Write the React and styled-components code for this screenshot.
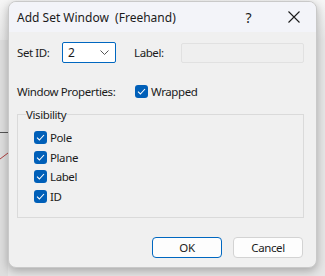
import React from "react";
import styled, { createGlobalStyle } from "styled-components";

const GlobalStyle = createGlobalStyle`
  html, body {
    margin: 0;
    padding: 0;
    background: #e9e9e9;
    font-family: "Noto Sans", "Open Sans", sans-serif;
    font-size: 11.5px;
    letter-spacing: -0.4px;
    color: #1b1b1b;
  }
`;

const Stage = styled.div`
  position: relative;
  width: 325px;
  height: 276px;
  overflow: hidden;
  background: linear-gradient(to bottom, #f6f6f6 0px, #e6e6e6 40px);
`;

const Backdrop = styled.svg`
  position: absolute;
  left: 0;
  top: 0;
`;

const Window = styled.div`
  position: relative;
  margin: 1px 0 0 8px;
  width: 309px;
  height: 267px;
  box-sizing: border-box;
  border: 1px solid #c9c9c9;
  border-radius: 8px;
  background: #f0f0f0;
  box-shadow: 0 3px 10px rgba(0, 0, 0, 0.28);
  display: flex;
  flex-direction: column;
  overflow: hidden;
`;

const TitleBar = styled.div`
  height: 30px;
  flex-shrink: 0;
  display: flex;
  align-items: center;
  padding-left: 8px;
  background: #f3f4f9;
`;

const Title = styled.div`
  flex: 1;
  font-size: 12px;
  letter-spacing: 0;
  white-space: pre;
`;

const TitleButton = styled.div`
  width: 45px;
  height: 30px;
  display: flex;
  align-items: center;
  justify-content: center;
  font-size: 14px;
  letter-spacing: 0;
`;

const Body = styled.div`
  flex: 1;
  display: flex;
  flex-direction: column;
  padding: 10px 12px 9px 8px;
`;

const Row = styled.div`
  display: flex;
  align-items: center;
  height: ${(p) => p.h || 21}px;
  margin-top: ${(p) => p.mt || 0}px;
`;

const FieldLabel = styled.span`
  width: ${(p) => p.w}px;
  flex-shrink: 0;
`;

const Combo = styled.div`
  width: 54px;
  height: 21px;
  box-sizing: border-box;
  border: 1px solid #0067c0;
  border-radius: 2px;
  background: #ffffff;
  display: flex;
  align-items: center;
  justify-content: space-between;
  padding: 0 6px 0 5px;
  margin-right: 18px;
  font-size: 12px;
`;

const TextField = styled.div`
  flex: 1;
  height: 20px;
  box-sizing: border-box;
  border: 1px solid #e1e1e1;
  border-radius: 2px;
  background: #efefef;
`;

const CheckRow = styled.label`
  display: flex;
  align-items: center;
  gap: 3px;
  height: ${(p) => p.h || 19.5}px;
`;

const Box = styled.span`
  width: 13px;
  height: 13px;
  border-radius: 3px;
  background: #005fb8;
  display: flex;
  align-items: center;
  justify-content: center;
`;

const Group = styled.fieldset`
  margin: 5px 0 0 0;
  padding: 6px 0 0 8px;
  height: 111px;
  box-sizing: border-box;
  border: 1px solid #dadada;
  border-radius: 0;
`;

const Legend = styled.legend`
  padding: 0 1px 0 0;
  margin-left: 0;
`;

const GroupItems = styled.div`
  display: flex;
  flex-direction: column;
  padding-left: 8px;
`;

const Buttons = styled.div`
  display: flex;
  justify-content: flex-end;
  gap: 11px;
  margin-top: auto;
  padding-right: 1px;
`;

const Button = styled.button`
  width: 70px;
  height: 21px;
  box-sizing: border-box;
  border: 1px solid ${(p) => (p.primary ? "#0067c0" : "#d3d3d3")};
  border-radius: 4px;
  background: #fdfdfd;
  font-family: inherit;
  font-size: 11.5px;
  letter-spacing: -0.4px;
  color: #1b1b1b;
  padding: 0;
`;

const Check = () => (
  <Box>
    <svg width="9" height="7" viewBox="0 0 9 7">
      <path d="M1 3.6 L3.4 6 L8 1" fill="none" stroke="#fff" strokeWidth="1.1" />
    </svg>
  </Box>
);

const CheckItem = ({ children, h }) => (
  <CheckRow h={h}>
    <Check />
    <span>{children}</span>
  </CheckRow>
);

export default function App() {
  return (
    <>
      <GlobalStyle />
      <Stage>
        <Backdrop width="10" height="276">
          <rect x="0" y="40" width="8" height="236" fill="#dedede" />
          <line x1="0" y1="132.5" x2="8" y2="132.5" stroke="#555" strokeWidth="1" />
          <line x1="0" y1="159" x2="8" y2="153" stroke="#b04040" strokeWidth="1" />
        </Backdrop>
        <Window>
          <TitleBar>
            <Title>{"Add Set Window  (Freehand)"}</Title>
            <TitleButton>?</TitleButton>
            <TitleButton>
              <svg width="12" height="12" viewBox="0 0 12 12">
                <path d="M0.5 0.5 L11.5 11.5 M11.5 0.5 L0.5 11.5" stroke="#1b1b1b" strokeWidth="1.1" />
              </svg>
            </TitleButton>
          </TitleBar>
          <Body>
            <Row>
              <FieldLabel w={45}>Set ID:</FieldLabel>
              <Combo>
                <span>2</span>
                <svg width="9" height="5" viewBox="0 0 9 5">
                  <path d="M0.5 0.5 L4.5 4.5 L8.5 0.5" fill="none" stroke="#555" strokeWidth="1" />
                </svg>
              </Combo>
              <FieldLabel w={47}>Label:</FieldLabel>
              <TextField />
            </Row>
            <Row mt={18}>
              <FieldLabel w={118}>Window Properties:</FieldLabel>
              <CheckItem h={21}>Wrapped</CheckItem>
            </Row>
            <Group>
              <Legend>Visibility</Legend>
              <GroupItems>
                <CheckItem>Pole</CheckItem>
                <CheckItem>Plane</CheckItem>
                <CheckItem>Label</CheckItem>
                <CheckItem>ID</CheckItem>
              </GroupItems>
            </Group>
            <Buttons>
              <Button primary>OK</Button>
              <Button>Cancel</Button>
            </Buttons>
          </Body>
        </Window>
      </Stage>
    </>
  );
}
